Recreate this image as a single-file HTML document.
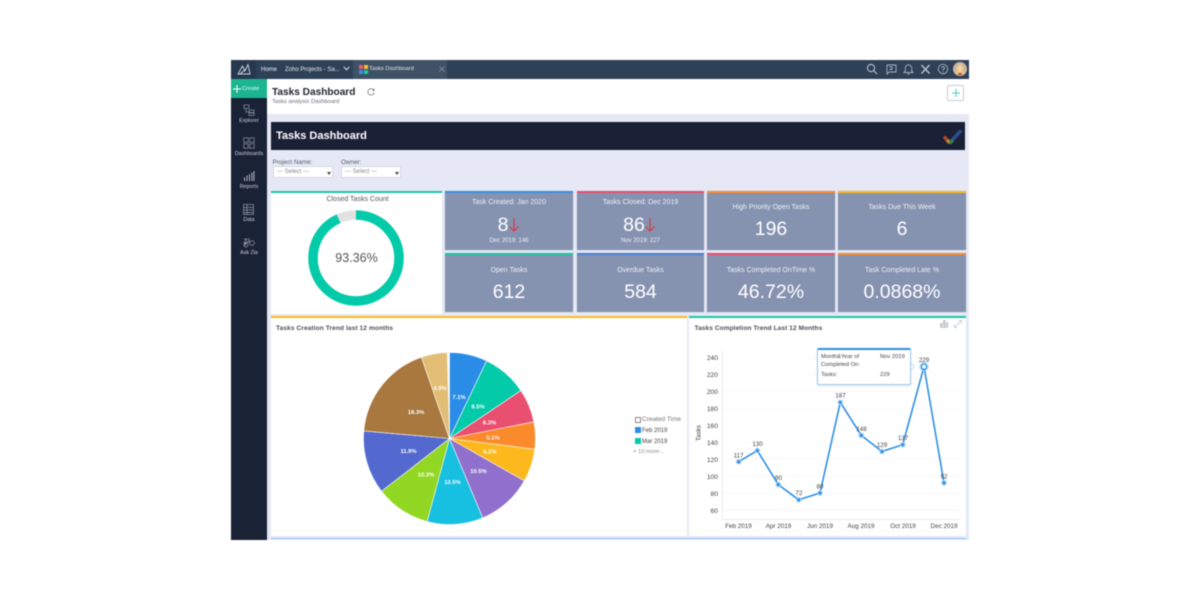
<!DOCTYPE html>
<html>
<head>
<meta charset="utf-8">
<title>Tasks Dashboard</title>
<style>
html,body{margin:0;padding:0;width:1200px;height:600px;background:#fff;overflow:hidden}
*{box-sizing:border-box}
body{font-family:"Liberation Sans",sans-serif}
#a{position:absolute;left:0;top:0;width:1200px;height:600px;filter:blur(.5px)}
#a div,#a svg{position:absolute}
.t{white-space:nowrap;line-height:1}
.c{text-align:center}
.k{background:#8592b0;border-top:2px solid #000;box-shadow:0 0 0 .5px #d5d9e8}
.kt{position:absolute;left:0;right:0;text-align:center;color:#eef0f6;font-size:7px;line-height:8px;white-space:nowrap}
.kv{position:absolute;left:0;right:0;text-align:center;color:#fff;font-size:19.500px;line-height:24px;white-space:nowrap}
.kn{position:absolute;text-align:center;color:#fff;font-size:19.500px;line-height:24px;white-space:nowrap}
.ks{position:absolute;left:0;right:0;text-align:center;color:#eef0f6;font-size:6px;line-height:7px;white-space:nowrap}
.sl{left:231px;width:36px;text-align:center;color:#c9cedb;font-size:5.300px;line-height:7px;white-space:nowrap}
.sel{background:#fff;border:1px solid #d6d9e4;color:#888;font-size:6px;line-height:11px;padding-left:3px;height:12px;width:60px;top:166px}
.lab{font-size:6.300px;color:#555d70;top:159px;line-height:8px;white-space:nowrap}
</style>
</head>
<body>
<div id="a">
<!-- window -->
<div style="left:231px;top:60px;width:738px;height:480px;background:#e6e9f5"></div>
<!-- top bar -->
<div style="left:231px;top:60px;width:738px;height:19px;background:#2e4157"></div>
<div style="left:231px;top:60px;width:25px;height:19px;background:#27384e"></div>
<div style="left:353px;top:60px;width:94px;height:19px;background:#3f5265"></div>
<svg style="left:237px;top:63px" width="14" height="13" viewBox="0 0 14 13" fill="none" stroke="#cfd5de" stroke-width=".9"><path d="M1 11 L5.500 3 L8 8 L11 1.500 L13 11 Z M3 11 L9 6"/></svg>
<div class="t" style="left:261px;top:66.500px;font-size:6px;color:#eef1f5">Home</div>
<div class="t" style="left:285px;top:66.500px;font-size:6px;color:#e4e8ee">Zoho Projects - Sa...</div>
<svg style="left:343px;top:66px" width="7" height="5" viewBox="0 0 7 5" fill="none" stroke="#e4e8ee" stroke-width="1"><path d="M.7 .8 L3.500 3.800 L6.300 .8"/></svg>
<svg style="left:359px;top:65px" width="9" height="9" viewBox="0 0 9 9"><rect width="4" height="4" fill="#ef5a6f"/><rect x="5" width="4" height="4" fill="#f6bf26"/><rect y="5" width="4" height="4" fill="#3a8fe0"/><rect x="5" y="5" width="4" height="4" fill="#1bc7a4"/></svg>
<div class="t" style="left:369px;top:67px;font-size:5.800px;color:#dfe4ea">Tasks Dashboard</div>
<svg style="left:439px;top:66px" width="6" height="6" viewBox="0 0 6 6" stroke="#8a97a6" stroke-width=".8"><path d="M.5 .5 L5.500 5.500 M5.500 .5 L.5 5.500"/></svg>
<!-- top right icons -->
<svg style="left:866px;top:63px" width="12" height="12" viewBox="0 0 12 12" fill="none" stroke="#c9d0d9" stroke-width="1"><circle cx="5" cy="5" r="3.600"/><path d="M7.700 7.700 L11 11"/></svg>
<svg style="left:886px;top:63px" width="11" height="12" viewBox="0 0 11 12" fill="none" stroke="#aab3bf" stroke-width=".9"><path d="M1 2 H10 V9 H3 L1 11 Z"/><path d="M3.500 4 H6 V6.500 H3.500"/></svg>
<svg style="left:903px;top:63px" width="11" height="12" viewBox="0 0 11 12" fill="none" stroke="#aab3bf" stroke-width=".9"><path d="M1 9.500 H10 L8.700 7.800 V5 A3.200 3.200 0 0 0 2.300 5 V7.800 Z M4.500 11 H6.500"/></svg>
<svg style="left:920px;top:63px" width="11" height="12" viewBox="0 0 11 12" fill="none" stroke="#b5bcc6" stroke-width="1.600"><path d="M1.500 2 L9.500 10.500 M9.500 2 L1.500 10.500"/></svg>
<svg style="left:937px;top:63px" width="12" height="12" viewBox="0 0 12 12" fill="none" stroke="#aab3bf" stroke-width=".9"><circle cx="6" cy="6" r="4.700"/><path d="M4.700 4.800 A1.400 1.400 0 1 1 6 6.500 V7.500 M6 8.400 V9.200"/></svg>
<svg style="left:953px;top:62px" width="14" height="14" viewBox="0 0 14 14"><circle cx="7" cy="7" r="7" fill="#c9b6a2"/><path d="M3.500 13 C3 6 4 2 7 2 C10 2 11 6 10.500 13 Z" fill="#e9c77f"/><ellipse cx="7" cy="6.500" rx="2" ry="2.800" fill="#efd0bb"/><path d="M4.500 13 C5 10 9 10 9.500 13 Z" fill="#b5563f"/></svg>

<!-- sidebar -->
<div style="left:231px;top:79px;width:36px;height:461px;background:#1a2236"></div>
<div style="left:231px;top:79px;width:36px;height:19px;background:#1bb58f"></div>
<svg style="left:233px;top:85px" width="8" height="8" viewBox="0 0 8 8" stroke="#fff" stroke-width="1"><path d="M4 0 V8 M0 4 H8"/></svg>
<div class="t" style="left:242px;top:86.500px;font-size:5.800px;color:#f2fbf8">Create</div>
<svg style="left:243px;top:104px" width="12" height="12" viewBox="0 0 12 12" fill="none" stroke="#8f97a9" stroke-width=".7"><rect x="1" y="1" width="5" height="3.500"/><rect x="6" y="6" width="5" height="2.500"/><rect x="6" y="9" width="5" height="2.500"/><path d="M3 4.500 V8 H6"/></svg>
<div class="t sl" style="top:118px">Explorer</div>
<svg style="left:243px;top:137px" width="12" height="12" viewBox="0 0 12 12" fill="none" stroke="#8f97a9" stroke-width=".7"><rect x=".8" y=".8" width="4.400" height="4.400"/><rect x="6.800" y=".8" width="4.400" height="4.400"/><rect x=".8" y="6.800" width="4.400" height="4.400"/><rect x="6.800" y="6.800" width="4.400" height="4.400"/></svg>
<div class="t sl" style="top:151px">Dashboards</div>
<svg style="left:243px;top:170px" width="12" height="12" viewBox="0 0 12 12" stroke="#b0b7c6" stroke-width="1"><path d="M1.500 11 V7.500 M4 11 V5.500 M6.500 11 V4 M9 11 V2.500 M11 11 V1"/></svg>
<div class="t sl" style="top:184px">Reports</div>
<svg style="left:243px;top:204px" width="11" height="11" viewBox="0 0 11 11" fill="none" stroke="#8f97a9" stroke-width=".7"><rect x=".5" y=".5" width="10" height="10"/><path d="M.5 3.500 H10.500 M.5 6 H10.500 M.5 8.500 H10.500 M4 .5 V10.500"/></svg>
<div class="t sl" style="top:217px">Data</div>
<svg style="left:243px;top:237px" width="12" height="11" viewBox="0 0 12 11" fill="none" stroke="#a5abbb" stroke-width=".7"><path d="M1 2 H4 L1 6 H4 M6 1 V6 M1 9 L5 4"/><circle cx="9" cy="6" r="2.300"/><circle cx="3" cy="8" r="2"/></svg>
<div class="t sl" style="top:250px">Ask Zia</div>

<!-- header -->
<div style="left:267px;top:79px;width:702px;height:35px;background:#fff"></div>
<div class="t" style="left:272px;top:88px;font-size:10.100px;font-weight:bold;color:#23262e">Tasks Dashboard</div>
<div class="t" style="left:272px;top:100px;font-size:5.800px;color:#666c78">Tasks analysis Dashboard</div>
<svg style="left:367px;top:88px" width="8" height="8" viewBox="0 0 8 8" fill="none" stroke="#666" stroke-width=".7"><path d="M6.800 2.200 A3.200 3.200 0 1 0 7.200 4.500 M7 .8 V2.500 H5.300"/></svg>
<div style="left:947px;top:85px;width:17px;height:16px;background:#fff;border:1px solid #c9ccd2;border-radius:2px"></div>
<svg style="left:952px;top:89px" width="8" height="8" viewBox="0 0 8 8" stroke="#3fd0c9" stroke-width="1"><path d="M4 0 V8 M0 4 H8"/></svg>

<!-- banner -->
<div style="left:271px;top:122px;width:694px;height:28px;background:#1a2035"></div>
<div class="t" style="left:276px;top:131px;font-size:11px;font-weight:bold;color:#fff">Tasks Dashboard</div>
<svg style="left:942px;top:127px" width="20" height="20" viewBox="0 0 20 20" fill="none"><path d="M8.500 15 L19 3.500" stroke="#2a4f95" stroke-width="3.500"/><path d="M2 9.500 L5 13" stroke="#b8442f" stroke-width="3.500"/><path d="M5 13 L8 16" stroke="#b98a2d" stroke-width="3.500"/><path d="M8 16.500 L11 13" stroke="#3a8247" stroke-width="3"/></svg>

<!-- filters -->
<div class="lab" style="left:272.500px">Project Name:</div>
<div class="lab" style="left:341px">Owner:</div>
<div class="sel" style="left:273px">--- Select ---</div>
<div class="sel" style="left:341px">--- Select ---</div>
<svg style="left:327px;top:172px" width="4" height="3" viewBox="0 0 4 3"><path d="M0 0 H4 L2 3 Z" fill="#444"/></svg>
<svg style="left:395px;top:172px" width="4" height="3" viewBox="0 0 4 3"><path d="M0 0 H4 L2 3 Z" fill="#444"/></svg>

<!-- donut card -->
<div style="left:271px;top:191px;width:171px;height:123px;background:#fff;border-top:2px solid #1bc7a4"></div>
<div class="t c" style="left:272px;width:171px;top:195.500px;font-size:7px;color:#555">Closed Tasks Count</div>
<svg style="left:300px;top:202px" width="112" height="112" viewBox="0 0 112 112" fill="none">
<circle cx="56" cy="56" r="43" stroke="#e2e2e2" stroke-width="9.500"/>
<circle cx="56" cy="56" r="43" stroke="#03cba9" stroke-width="9.500" pathLength="100" stroke-dasharray="93.36 6.64" transform="rotate(-90 56 56)"/>
</svg>
<div class="t c" style="left:271px;width:171px;top:251.500px;font-size:12.500px;color:#555">93.36%</div>

<!-- KPI -->
<div class="k" style="left:445px;top:191px;width:128px;height:59px;border-top-color:#3a8fe0">
  <div class="kt" style="top:5.500px">Task Created: Jan 2020</div>
  <div class="kn" style="left:42px;width:32px;top:20px">8</div>
  <svg style="left:63px;top:25px" width="12" height="14" viewBox="0 0 12 14" fill="none" stroke="#e2343f" stroke-width="1.100"><path d="M6 0 V13 M1.500 8.500 L6 13 L10.500 8.500"/></svg>
  <div class="ks" style="top:44.500px">Dec 2019: 146</div>
</div>
<div class="k" style="left:577px;top:191px;width:127px;height:59px;border-top-color:#e94f6f">
  <div class="kt" style="top:5.500px">Tasks Closed: Dec 2019</div>
  <div class="kn" style="left:41px;width:32px;top:20px">86</div>
  <svg style="left:67px;top:25px" width="12" height="14" viewBox="0 0 12 14" fill="none" stroke="#e2343f" stroke-width="1.100"><path d="M6 0 V13 M1.500 8.500 L6 13 L10.500 8.500"/></svg>
  <div class="ks" style="top:44.500px">Nov 2019: 227</div>
</div>
<div class="k" style="left:707px;top:191px;width:128px;height:59px;border-top-color:#fb8a2a">
  <div class="kt" style="top:11px">High Priority Open Tasks</div>
  <div class="kv" style="top:24px">196</div>
</div>
<div class="k" style="left:838px;top:191px;width:128px;height:59px;border-top-color:#fdb81e">
  <div class="kt" style="top:11px">Tasks Due This Week</div>
  <div class="kv" style="top:24px">6</div>
</div>
<div class="k" style="left:445px;top:253px;width:128px;height:59px;border-top-color:#1bc7a4">
  <div class="kt" style="top:11.500px">Open Tasks</div>
  <div class="kv" style="top:25px">612</div>
</div>
<div class="k" style="left:577px;top:253px;width:127px;height:59px;border-top-color:#4a7fd0">
  <div class="kt" style="top:11.500px">Overdue Tasks</div>
  <div class="kv" style="top:25px">584</div>
</div>
<div class="k" style="left:707px;top:253px;width:128px;height:59px;border-top-color:#e94f6f">
  <div class="kt" style="top:11.500px">Tasks Completed OnTime %</div>
  <div class="kv" style="top:25px">46.72%</div>
</div>
<div class="k" style="left:838px;top:253px;width:128px;height:59px;border-top-color:#fb8a2a">
  <div class="kt" style="top:11.500px">Task Completed Late %</div>
  <div class="kv" style="top:25px">0.0868%</div>
</div>

<!-- left chart panel -->
<div style="left:271px;top:316px;width:416px;height:220px;background:#fff;border-top:2px solid #fdb81e"></div>
<div class="t" style="left:276px;top:326px;font-size:6.500px;font-weight:bold;color:#4a4d55;letter-spacing:.12px">Tasks Creation Trend last 12 months</div>
<svg style="left:271px;top:316px" width="416" height="220" viewBox="271 316 416 220" font-family="Liberation Sans" font-size="5.800" font-weight="bold" fill="#fff" text-anchor="middle">
<g stroke="#fff" stroke-width=".6">
<path d="M449.500 438.500 L449.500 352.500 A86 86 0 0 1 486.600 360.900 Z" fill="#2a8ce6"/>
<path d="M449.500 438.500 L486.600 360.900 A86 86 0 0 1 520.900 390.600 Z" fill="#03cba9"/>
<path d="M449.500 438.500 L520.900 390.600 A86 86 0 0 1 533.900 421.900 Z" fill="#e94f70"/>
<path d="M449.500 438.500 L533.900 421.900 A86 86 0 0 1 534.800 449.300 Z" fill="#fb8a2a"/>
<path d="M449.500 438.500 L534.800 449.300 A86 86 0 0 1 524.300 480.900 Z" fill="#fdb81e"/>
<path d="M449.500 438.500 L524.300 480.900 A86 86 0 0 1 482.700 517.900 Z" fill="#9070cc"/>
<path d="M449.500 438.500 L482.700 517.900 A86 86 0 0 1 427.100 521.500 Z" fill="#17bfe0"/>
<path d="M449.500 438.500 L427.100 521.500 A86 86 0 0 1 381.500 491.200 Z" fill="#92d723"/>
<path d="M449.500 438.500 L381.500 491.200 A86 86 0 0 1 363.800 430.900 Z" fill="#5369cf"/>
<path d="M449.500 438.500 L363.800 430.900 A86 86 0 0 1 421.400 357.200 Z" fill="#a8783e"/>
<path d="M449.500 438.500 L421.400 357.200 A86 86 0 0 1 447.300 352.500 Z" fill="#e2bd75"/>
</g>
<text x="459" y="399">7.1%</text>
<text x="478" y="408.500">8.5%</text>
<text x="489.500" y="424.500">6.3%</text>
<text x="493" y="439.500">5.1%</text>
<text x="490" y="453.500">6.2%</text>
<text x="478.500" y="473">10.5%</text>
<text x="452.500" y="484">10.5%</text>
<text x="426" y="476.500">10.3%</text>
<text x="408.500" y="453">11.9%</text>
<text x="416" y="414">18.3%</text>
<text x="440" y="390">4.9%</text>
</svg>
<!-- legend -->
<div style="left:634.500px;top:417px;width:6px;height:6px;border:.7px solid #888;background:#fff"></div>
<div class="t" style="left:642px;top:417px;font-size:6.500px;color:#777">Created Time</div>
<div style="left:634.500px;top:427px;width:6px;height:6px;background:#2a8ce6"></div>
<div class="t" style="left:642px;top:427.500px;font-size:6px;color:#444">Feb 2019</div>
<div style="left:634.500px;top:438px;width:6px;height:6px;background:#03cba9"></div>
<div class="t" style="left:642px;top:438.500px;font-size:6px;color:#444">Mar 2019</div>
<div class="t" style="left:633px;top:449.500px;font-size:5.800px;color:#888">+ 10 more...</div>

<!-- right chart panel -->
<div style="left:689px;top:316px;width:277px;height:220px;background:#fff;border-top:2px solid #1bc7a4"></div>
<div class="t" style="left:694.500px;top:325.500px;font-size:6.500px;font-weight:bold;color:#4a4d55;letter-spacing:.1px">Tasks Completion Trend Last 12 Months</div>
<svg style="left:940px;top:320px" width="8" height="8" viewBox="0 0 8 8" fill="#c4c8ce"><path d="M0 3 H2.500 V8 H0 Z M3 0 H5.500 V8 H3 Z M6 2 H8 V8 H6 Z"/></svg>
<svg style="left:954px;top:320px" width="8" height="8" viewBox="0 0 8 8" stroke="#c4c8ce" stroke-width=".8" fill="none"><path d="M.5 7.500 L7.500 .5 M4.500 .5 H7.500 V3.500 M.5 4.500 V7.500 H3.500"/></svg>
<svg style="left:689px;top:318px" width="277" height="218" viewBox="689 318 277 218" font-family="Liberation Sans" font-size="6.700" fill="#444">
<g stroke="#f7f8fa" stroke-width=".7">
<path d="M723 357.300 H960 M723 374.300 H960 M723 391.200 H960 M723 408.200 H960 M723 425.200 H960 M723 442.200 H960 M723 459.100 H960 M723 476.100 H960 M723 493 H960 M723 510 H960"/>
</g>
<path d="M722.500 350 V519.500 H960" fill="none" stroke="#e2e4e9" stroke-width=".7"/>
<g text-anchor="end">
<text x="718" y="360">240</text><text x="718" y="377">220</text><text x="718" y="394">200</text><text x="718" y="411">180</text><text x="718" y="428">160</text><text x="718" y="445">140</text><text x="718" y="462">120</text><text x="718" y="479">100</text><text x="718" y="496">80</text><text x="718" y="513">60</text>
</g>
<text transform="translate(700.500 433) rotate(-90)" text-anchor="middle" font-size="6.300">Tasks</text>
<g text-anchor="middle" font-size="6.300">
<text x="738.500" y="528">Feb 2019</text><text x="778.500" y="528">Apr 2019</text><text x="820" y="528">Jun 2019</text><text x="861" y="528">Aug 2019</text><text x="903" y="528">Oct 2019</text><text x="944" y="528">Dec 2019</text>
</g>
<polyline points="738.700,461.700 757.300,450.600 778.300,484.600 798.700,499.800 820,493 840.300,402.300 861.300,435.400 882,451.500 902.700,444.700 924,366.700 944,482.900" fill="none" stroke="#2f8fe6" stroke-width="1.600" stroke-linejoin="round"/>
<g fill="#2f8fe6" stroke="#a9d2f6" stroke-width="1.200">
<circle cx="738.700" cy="461.700" r="2.200"/><circle cx="757.300" cy="450.600" r="2.200"/><circle cx="778.300" cy="484.600" r="2.200"/><circle cx="798.700" cy="499.800" r="2.200"/><circle cx="820" cy="493" r="2.200"/><circle cx="840.300" cy="402.300" r="2.200"/><circle cx="861.300" cy="435.400" r="2.200"/><circle cx="882" cy="451.500" r="2.200"/><circle cx="902.700" cy="444.700" r="2.200"/><circle cx="944" cy="482.900" r="2.200"/>
</g>
<circle cx="924" cy="366.700" r="2.600" fill="#fff" stroke="#2f8fe6" stroke-width="1.400"/>
<circle cx="924" cy="366.700" r="4.200" fill="none" stroke="#a9d2f6" stroke-width="1"/>
<g text-anchor="middle" font-size="6.200">
<text x="738.500" y="457.500">117</text><text x="757.500" y="446">130</text><text x="778.500" y="480">90</text><text x="799" y="495">72</text><text x="820" y="488.500">80</text><text x="840.500" y="397.500">187</text><text x="861.500" y="431">148</text><text x="882" y="447">129</text><text x="903" y="440">137</text><text x="924" y="362">229</text><text x="944" y="478.500">92</text>
</g>
</svg>
<!-- tooltip -->
<svg style="left:910px;top:362px" width="5" height="9" viewBox="0 0 5 9"><path d="M0 0 L4.500 4.500 L0 9 Z" fill="#fff" stroke="#a9d2f6" stroke-width=".6"/></svg>
<div style="left:817px;top:348px;width:94px;height:37px;background:#fff;border:1px solid #9ccbf3;border-top:2.500px solid #2f8fe6;border-radius:2px;box-shadow:0 1px 2px rgba(0,0,0,.12)"></div>
<div class="t" style="left:821px;top:355px;font-size:5.800px;color:#444">Month&amp;Year of</div>
<div class="t" style="left:821px;top:363px;font-size:5.800px;color:#444">Completed On:</div>
<div class="t" style="left:821px;top:373px;font-size:5.800px;color:#444">Tasks:</div>
<div class="t" style="left:880px;top:355px;font-size:5.800px;color:#444">Nov 2019</div>
<div class="t" style="left:880px;top:373px;font-size:5.800px;color:#444">229</div>
<!-- bottom strip -->
<div style="left:271px;top:538px;width:695px;height:1px;background:#8fc2f2"></div>
</div>
</body>
</html>
